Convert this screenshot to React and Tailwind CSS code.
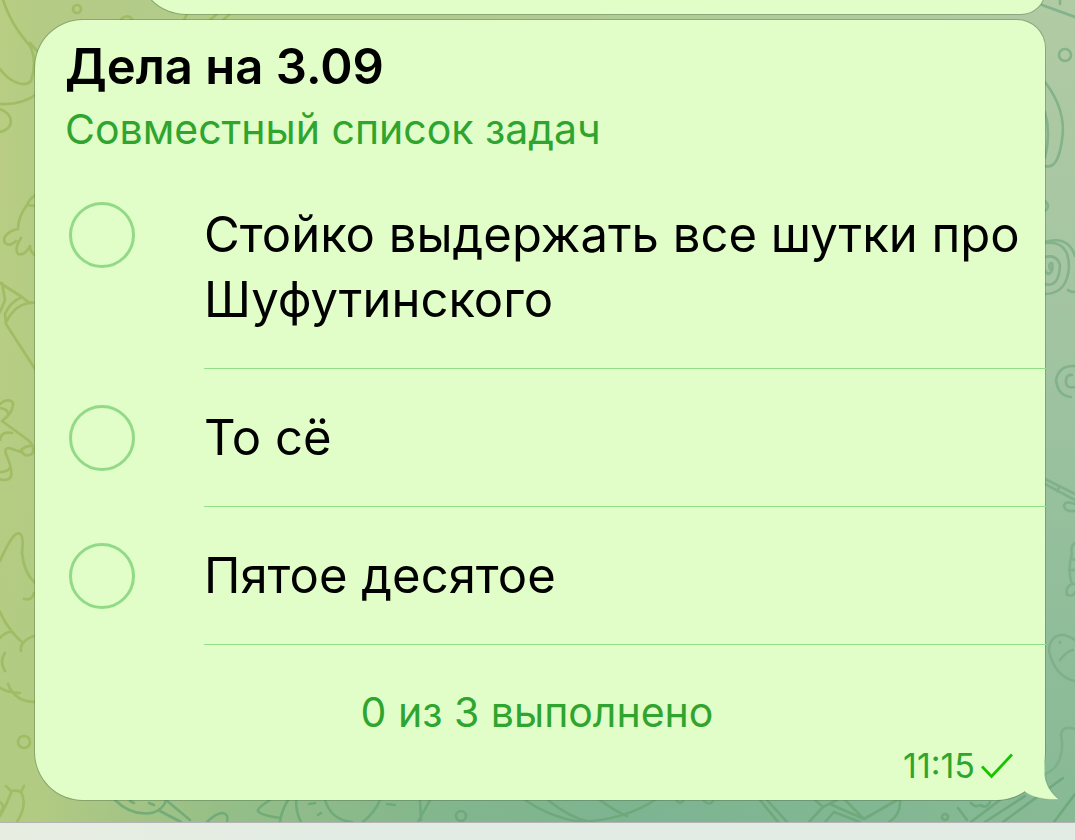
import React from "react";

const tasks = [
  "Стойко выдержать все шутки про Шуфутинского",
  "То сё",
  "Пятое десятое",
];

function Wallpaper() {
  return (
    <svg
      aria-hidden="true"
      className="absolute inset-0 h-full w-full"
      viewBox="0 0 1075 840"
      preserveAspectRatio="none"
    >
      <defs>
        <linearGradient id="base" x1="0" y1="0" x2="1" y2="0">
          <stop offset="0" stopColor="#b9ce82" />
          <stop offset="0.035" stopColor="#b4cb85" />
          <stop offset="1" stopColor="#b0cba5" />
        </linearGradient>
        <linearGradient id="left" x1="0" y1="0" x2="0" y2="1">
          <stop offset="0" stopColor="#b1cb82" stopOpacity="0" />
          <stop offset="0.5" stopColor="#b1cb82" stopOpacity="0.3" />
          <stop offset="0.93" stopColor="#b1cb82" stopOpacity="1" />
        </linearGradient>
        <linearGradient id="right" x1="0" y1="0" x2="0" y2="1">
          <stop offset="0" stopColor="#b1cba4" />
          <stop offset="0.35" stopColor="#a5c5a2" />
          <stop offset="0.6" stopColor="#97c09d" />
          <stop offset="1" stopColor="#86b995" />
        </linearGradient>
        <linearGradient id="bottom" x1="0" y1="0" x2="1" y2="0">
          <stop offset="0" stopColor="#b1cb82" />
          <stop offset="0.035" stopColor="#b1cb82" />
          <stop offset="0.08" stopColor="#abc784" />
          <stop offset="0.2" stopColor="#96bf87" />
          <stop offset="0.42" stopColor="#82b68d" />
          <stop offset="0.6" stopColor="#7db491" />
          <stop offset="1" stopColor="#88ba95" />
        </linearGradient>
      </defs>
      <rect width="1075" height="840" fill="url(#base)" />
      <rect width="36" height="840" fill="url(#left)" />
      <rect y="780" width="1075" height="60" fill="url(#bottom)" />
      <rect x="1030" width="45" height="840" fill="url(#right)" />
      <g fill="none" stroke="#9dbb62" strokeOpacity="0.9" strokeWidth="2.7" strokeLinecap="round" strokeLinejoin="round">
        <path d="M3 0C10 20 18 32 30 46C36 58 34 72 31 81C23 89 8 80 0 69M30 43L37 51M0 104C15 105 27 101 37 94M0 109C15 115 14 129 0 132" />
        <circle cx="77" cy="9" r="4" />
        <path d="M121 20C123 16 129 15 132 19M184 20L187 14M210 20L217 14M223 20L230 14" />
        <path d="M37 194Q30 198 27 205L35 206M27 205Q18 217 18 229C8 231 2 237 5 243Q10 247 16 241M21 238Q14 249 18 254Q25 256 30 246Q30 252 35 255" />
        <path d="M0 283L22 297L28 302L35 303M2 283L5 300L0 312M5 314Q10 302 22 297M6 322Q16 303 32 303M5 314L6 324L35 369" />
        <path d="M0 404C6 398 14 400 13 405Q12 414 2 421L28 440Q36 447 32 454Q24 458 21 450Q27 445 33 446M0 408Q7 409 8 413M21 452L9 448Q4 448 6 454Q15 475 9 479Q3 481 0 479M12 433Q1 431 0 440M0 472Q7 472 10 468" />
        <path d="M0 561Q14 529 20 534Q24 536 22 553Q24 573 35 583M24 599Q32 601 34 593M0 612Q8 630 23 643Q28 637 35 636M0 638Q5 632 11 632M23 643Q20 646 21 651M5 653Q-1 661 5 671M0 688Q8 693 20 693M8 684Q15 702 35 702" />
        <circle cx="24" cy="742" r="6" />
        <path d="M6 786L11 791Q17 790 21 792L24 786M21 792Q28 804 17 822M0 802Q6 806 0 813M11 793Q6 806 0 816" />
      </g>
      <g fill="none" stroke="#69a676" strokeOpacity="0.8" strokeWidth="2.6" strokeLinecap="round" strokeLinejoin="round">
        <path d="M115 800C133 818 161 818 166 800M130 801L134 803M149 803L154 805M160 811L181 822M166 800L190 820M207 822Q216 813 223 813Q229 814 227 822" />
        <path d="M270 800Q257 808 258 811Q260 815 280 818M288 800Q281 812 280 822M296 800Q296 813 301 822M309 804L315 803M318 815L321 813M325 800Q331 820 352 822M380 800Q375 812 363 822M387 804L395 805M420 800L421 820M430 800L418 822" />
        <circle cx="461" cy="816" r="5" />
        <path d="M525 800Q555 820 585 822M548 800Q570 818 590 822M600 800Q618 813 627 816M580 822Q624 820 655 800M677 801Q680 805 683 801M704 801Q710 806 713 801M760 800L778 822M767 800L787 822M815 800L823 807L809 822M823 807L837 800M825 822L834 812L860 822M830 804L864 819L897 800M845 800L864 819M900 800Q901 815 889 822" />
        <circle cx="945" cy="817" r="3" />
        <path d="M958 808L967 820M971 803Q975 808 980 805Q987 809 990 802M971 822L1000 800M985 822L1025 796M1003 822L1063 778M1054 822L1075 794" />
      </g>
      <g fill="none" stroke="#7cae87" strokeOpacity="0.85" strokeWidth="2.6" strokeLinecap="round" strokeLinejoin="round">
        <path d="M1042 5L1075 17M1060 0V4" />
        <circle cx="1065" cy="55" r="6" />
        <path d="M1045 82Q1067 111 1062 140Q1058 170 1045 166M1045 112Q1051 133 1045 158M1045 201Q1051 206 1045 211" />
        <path d="M1050 269Q1048 263 1052 263Q1054 272 1048 274Q1037 264 1045 257Q1057 254 1060 265Q1059 288 1045 284M1045 243Q1069 240 1069 267Q1067 294 1045 294M1045 242Q1068 235 1075 256M1068 290Q1070 292 1075 292" />
        <path d="M1075 387Q1065 389 1066 380Q1067 374 1072 375M1075 366Q1059 365 1056 380Q1058 396 1071 397" />
        <path d="M1045 479L1075 494M1045 484L1075 500M1060 486L1057 491M1075 504Q1065 500 1064 506Q1065 512 1075 511" />
        <path d="M1075 543Q1070 546 1072 554Q1067 571 1072 584Q1065 587 1067 595Q1074 597 1075 592M1070 561Q1073 558 1075 560M1069 570H1075M1072 584H1075" />
        <path d="M1075 640C1061 630 1049 636 1049 651Q1055 677 1075 681M1060 660Q1067 651 1073 650M1060 642V643M1075 729Q1062 725 1061 735C1064 750 1061 768 1045 774" />
      </g>
    </svg>
  );
}

function BubbleTail() {
  return (
    <svg
      aria-hidden="true"
      className="absolute -right-[14px] bottom-0 h-14 w-9"
      viewBox="0 0 36 56"
    >
      <path d="M21.500 4V31C22 40 28 50 36 55.500C20 56 8 53 1 47Z" fill="#e1fec8" />
      <path d="M22.500 31C23 40 28.500 49 36 55.500C20 56 8 53 1 47" fill="none" stroke="#6b8f5c" strokeOpacity="0.4" strokeWidth="0.700" />
    </svg>
  );
}

export default function App() {
  return (
    <div className="relative isolate flex min-h-screen flex-col overflow-hidden font-['Inter','Noto_Sans',sans-serif] text-black">
      <div className="absolute inset-0 -z-10">
        <Wallpaper />
      </div>

      <main className="flex grow flex-col gap-1.5 pr-[30px] pl-[35px]">
        <div className="ml-[103px] flex h-3.5 items-end">
          <div className="h-14 grow rounded-br-[24px] rounded-bl-[48px] bg-[#e1fec8] shadow-[0_0_0_1px_rgba(70,100,60,0.35)]" />
        </div>

        <article className="relative rounded-[48px] rounded-tr-[28px] bg-[#e1fec8] pt-4 pb-3 shadow-[0_0_0_1px_rgba(70,100,60,0.35)]">
          <header className="pl-[30px]">
            <h1 className="text-[49px] leading-[62px] font-semibold">Дела на 3.09</h1>
            <p className="text-[41px] leading-[62px] text-[#2fa52f]">Совместный список задач</p>
          </header>

          <ul className="mt-1.5">
            {tasks.map((task, i) => (
              <li key={task} className="flex items-start pl-[34px]">
                <input
                  id={`task-${i}`}
                  type="checkbox"
                  className="mt-9 size-[66px] shrink-0 appearance-none rounded-full border-3 border-[#93da88] checked:bg-[#93da88]"
                />
                <label
                  htmlFor={`task-${i}`}
                  className="-mr-px ml-[69px] grow border-b border-[#93dd88] py-9 text-[49px] leading-[65px]"
                >
                  {task}
                </label>
              </li>
            ))}
          </ul>

          <p className="mt-9 pr-1.5 text-center text-[41px] leading-[62px] text-[#2fa52f]">
            0 из 3 выполнено
          </p>
          <footer className="flex items-center justify-end gap-1.5 pr-8 text-[#2fa52f]">
            <time className="text-[34px] leading-[45px]">11:15</time>
            <svg aria-label="Отправлено" role="img" className="h-7 w-8" viewBox="0 0 32 28">
              <path d="M1 14.500L10.500 24.500L31 2.500" fill="none" stroke="#18c400" strokeWidth="2.800" />
            </svg>
          </footer>
          <BubbleTail />
        </article>
      </main>

      <div className="h-[18px] border-t border-[#b3b3b3] bg-linear-to-r from-[#e7ede1] to-[#e2ece5] to-40%" />
    </div>
  );
}
